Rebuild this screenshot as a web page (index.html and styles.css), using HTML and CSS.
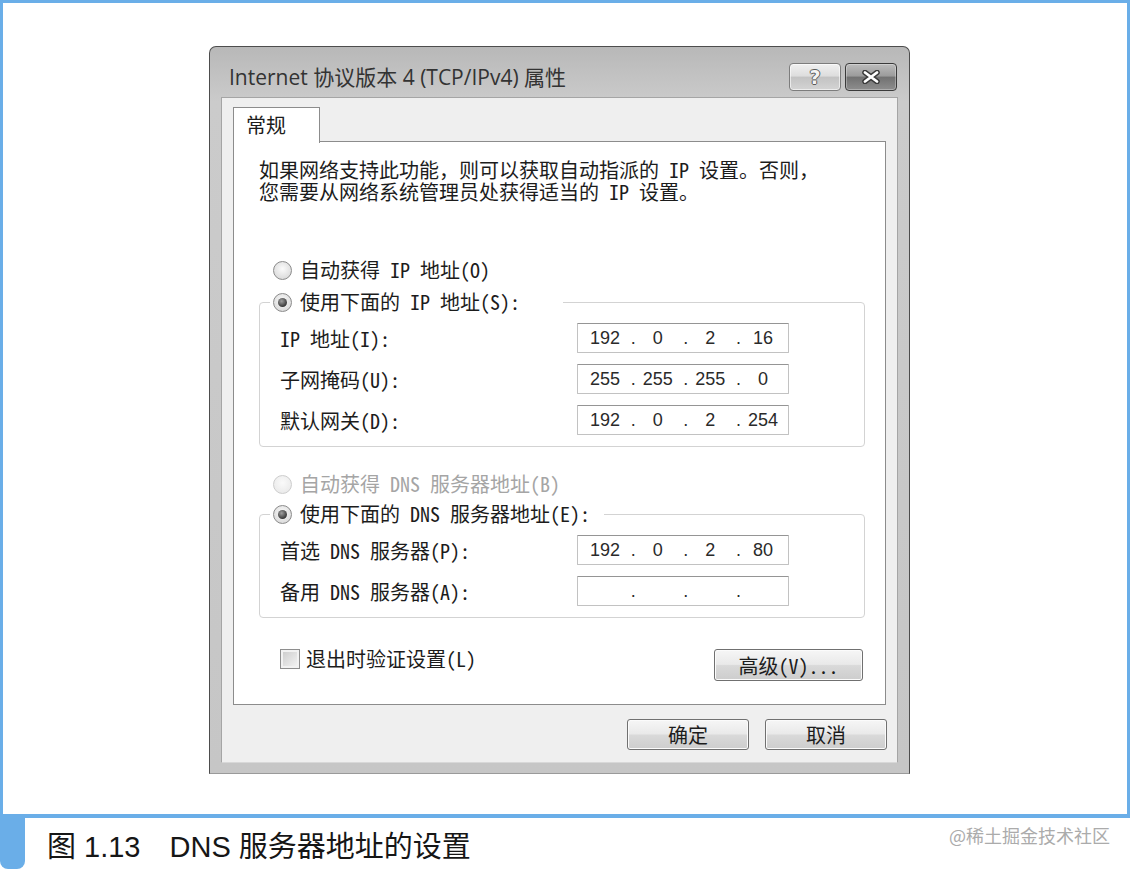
FILE: index.html
```html
<!DOCTYPE html>
<html lang="zh-CN">
<head>
    <meta charset="UTF-8">
    <title>DNS 服务器地址的设置</title>
    <link rel="stylesheet" href="styles.css">
</head>
<body>
<div class="page">
    <div class="figure">
        <div class="window">
            <div class="titlebar">
                <span class="title">Internet 协议版本 4 (TCP/IPv4) 属性</span>
                <div class="caption-btns">
                    <span class="cbtn help">?</span>
                    <span class="cbtn close">
                        <svg width="20" height="14" viewBox="0 0 20 14">
                            <path d="M4 2.5 L16 11.5 M16 2.5 L4 11.5" stroke="#3a3a3a" stroke-width="5.5" stroke-linecap="round"/>
                            <path d="M4 2.5 L16 11.5 M16 2.5 L4 11.5" stroke="#ffffff" stroke-width="2.8" stroke-linecap="round"/>
                        </svg>
                    </span>
                </div>
            </div>

            <div class="client">
                <div class="tabs"><span class="tab">常规</span></div>
                <div class="panel">
                    <p class="desc">如果网络支持此功能<span class="fw">，</span>则可以获取自动指派的 IP 设置<span class="fw">。</span>否则<span class="fw">，</span><br>您需要从网络系统管理员处获得适当的 IP 设置<span class="fw">。</span></p>

                    <div class="option first"><span class="radio"></span>自动获得 IP 地址(O)</div>
                    <fieldset class="group">
                        <legend class="option legend-ip"><span class="radio checked"></span>使用下面的 IP 地址(S):</legend>
                        <div class="fields">
                            <label>IP 地址(I):</label>
                            <div class="ip"><span class="seg">192</span><span class="dot">.</span><span class="seg">0</span><span class="dot">.</span><span class="seg">2</span><span class="dot">.</span><span class="seg">16</span></div>
                            <label>子网掩码(U):</label>
                            <div class="ip"><span class="seg">255</span><span class="dot">.</span><span class="seg">255</span><span class="dot">.</span><span class="seg">255</span><span class="dot">.</span><span class="seg">0</span></div>
                            <label>默认网关(D):</label>
                            <div class="ip"><span class="seg">192</span><span class="dot">.</span><span class="seg">0</span><span class="dot">.</span><span class="seg">2</span><span class="dot">.</span><span class="seg">254</span></div>
                        </div>
                    </fieldset>

                    <div class="option disabled second"><span class="radio"></span>自动获得 DNS 服务器地址(B)</div>
                    <fieldset class="group dns">
                        <legend class="option legend-dns"><span class="radio checked"></span>使用下面的 DNS 服务器地址(E):</legend>
                        <div class="fields">
                            <label>首选 DNS 服务器(P):</label>
                            <div class="ip"><span class="seg">192</span><span class="dot">.</span><span class="seg">0</span><span class="dot">.</span><span class="seg">2</span><span class="dot">.</span><span class="seg">80</span></div>
                            <label>备用 DNS 服务器(A):</label>
                            <div class="ip"><span class="seg"></span><span class="dot">.</span><span class="seg"></span><span class="dot">.</span><span class="seg"></span><span class="dot">.</span><span class="seg"></span></div>
                        </div>
                    </fieldset>

                    <div class="panel-footer">
                        <div class="checkrow"><span class="check"></span>退出时验证设置(L)</div>
                        <button class="btn advanced">高级(V)...</button>
                    </div>
                </div>

                <div class="actions">
                    <button class="btn">确定</button>
                    <button class="btn">取消</button>
                </div>
            </div>
        </div>
    </div>

    <div class="caption">
        <span class="caption-mark"></span>
        <span class="caption-text">图 1.13　DNS 服务器地址的设置</span>
        <span class="watermark">@稀土掘金技术社区</span>
    </div>
</div>
</body>
</html>
```

FILE: styles.css
```css
* {
    box-sizing: border-box;
}
body {
    margin: 0;
    background: #ffffff;
    font-family: "Noto Sans CJK SC", sans-serif;
}
.page {
    width: 1130px;
}
.figure {
    height: 818px;
    border: 3px solid #6aaee8;
    border-bottom-width: 4px;
    padding: 43px 0 0 206px;
}

/* window */
.window {
    width: 701px;
    height: 728px;
    border: 1px solid #4d4d4d;
    border-bottom-color: #9a9a9a;
    border-radius: 7px 7px 0 0;
    background: linear-gradient(#b8b8b8, #cbcbcb 55px, #c6c6c6);
    display: flex;
    flex-direction: column;
    padding: 0 11px 10px 11px;
}
.titlebar {
    height: 50px;
    display: flex;
    align-items: flex-start;
    justify-content: space-between;
    padding: 0 1px 0 8px;
}
.title {
    margin-top: 18px;
    font-family: "Open Sans", "Noto Sans CJK SC", sans-serif;
    font-size: 21px;
    line-height: 25px;
    color: #333333;
}
.caption-btns {
    display: flex;
    gap: 4px;
    margin-top: 16px;
}
.cbtn {
    width: 52px;
    height: 28px;
    border-radius: 4px;
    display: flex;
    align-items: center;
    justify-content: center;
}
.help {
    border: 1px solid #7d7d7d;
    background: linear-gradient(#f0f0f0, #dedede 45%, #c3c3c3 52%, #d4d4d4);
    box-shadow: inset 0 0 0 1px rgba(255,255,255,0.6);
    font-family: "DejaVu Sans", sans-serif;
    font-weight: bold;
    font-size: 19px;
    color: #f4f4f4;
    text-shadow: 1px 0 #5a5a5a, -1px 0 #5a5a5a, 0 1px #5a5a5a, 0 -1px #5a5a5a;
}
.close {
    border: 1px solid #3a3a3a;
    background: linear-gradient(#bcbcbc, #9c9c9c 45%, #727272 52%, #8e8e8e);
    box-shadow: inset 0 0 0 1px rgba(255,255,255,0.3);
}

.client {
    flex: 1;
    background: #efefef;
    border: 1px solid #a5a5a5;
    border-bottom-color: #d8d8d8;
    padding: 9px 11px 0 11px;
    display: flex;
    flex-direction: column;
}
.tabs {
    display: flex;
    height: 35px;
    margin-bottom: -1px;
    position: relative;
    z-index: 1;
}
.tab {
    width: 87px;
    height: 36px;
    border: 1px solid #8c8c8c;
    border-bottom: none;
    background: #ffffff;
    padding: 4px 0 0 12px;
    font-size: 20px;
    line-height: 26px;
    color: #1c1c1c;
}
.panel {
    height: 564px;
    border: 1px solid #8c8c8c;
    background: #ffffff;
    padding: 17px 20px 0 25px;
    font-size: 20px;
    font-feature-settings: "hwid";
    color: #1c1c1c;
}
.desc {
    margin: 0;
    line-height: 22px;
}
.fw {
    font-feature-settings: normal;
}

.option {
    display: flex;
    align-items: center;
    gap: 8px;
    height: 22px;
    line-height: 22px;
    white-space: nowrap;
}
.option.first {
    margin: 56px 0 0 14px;
}
.option.second {
    margin: 26px 0 0 14px;
}
.option.disabled {
    color: #a5a5a5;
}
.radio {
    flex: none;
    width: 19px;
    height: 19px;
    border-radius: 50%;
    border: 1px solid #8b8b8b;
    background: radial-gradient(circle at 50% 40%, #fbfbfb, #d2d2d2);
    position: relative;
}
.disabled .radio {
    border-color: #cdcdcd;
    background: radial-gradient(circle at 50% 40%, #fafafa, #e6e6e6);
}
.radio.checked::after {
    content: "";
    position: absolute;
    inset: 4px;
    border-radius: 50%;
    background: radial-gradient(circle at 40% 35%, #a0a0a0, #333333 75%);
}

.group {
    margin: 10px 0 0 0;
    padding: 10px 0 11px 10px;
    border: 1px solid #d3d3d3;
    border-radius: 4px;
    min-width: 0;
}
.group.dns {
    margin-top: 8px;
}
.group legend {
    padding: 0 3px;
}
.legend-ip {
    width: 293px;
}
.legend-dns {
    width: 334px;
}
.fields {
    display: grid;
    grid-template-columns: 297px 212px;
    row-gap: 11px;
    align-items: center;
    margin-left: 10px;
}
.fields label {
    white-space: nowrap;
}
.ip {
    height: 30px;
    border: 1px solid #c2c2c2;
    border-top-color: #959595;
    border-radius: 1px;
    display: flex;
    align-items: center;
    padding-left: 5px;
    font-family: "Liberation Sans", sans-serif;
    font-size: 18px;
    color: #2a2a2a;
}
.seg {
    width: 44px;
    text-align: center;
}
.dot {
    width: 8.67px;
    text-align: right;
}

.panel-footer {
    display: flex;
    justify-content: space-between;
    align-items: flex-start;
    margin-top: 31px;
    padding-left: 21px;
}
.checkrow {
    display: flex;
    align-items: center;
    gap: 6px;
    height: 20px;
    line-height: 20px;
}
.check {
    width: 20px;
    height: 20px;
    border: 1px solid #8e8e8e;
    background: linear-gradient(135deg, #c9c9c9, #f7f7f7);
    box-shadow: inset 0 0 0 2px #f2f2f2;
}

.btn {
    font-family: "Noto Sans CJK SC", sans-serif;
    font-size: 20px;
    font-feature-settings: "hwid";
    color: #1c1c1c;
    border: 1px solid #707070;
    border-radius: 3px;
    background: linear-gradient(#f6f6f6, #e9e9e9 48%, #d9d9d9 52%, #cdcdcd);
    box-shadow: inset 0 0 0 1px #fbfbfb;
    padding: 0;
    width: 122px;
    height: 31px;
    line-height: 29px;
}
.btn.advanced {
    width: 149px;
    height: 32px;
    margin-right: 2px;
}
.actions {
    display: flex;
    justify-content: flex-end;
    gap: 16px;
    margin: 14px -1px 0 0;
}

/* caption under the figure */
.caption {
    display: flex;
    height: 51px;
}
.caption-mark {
    width: 25px;
    height: 51px;
    background: #6aaee8;
    border-radius: 0 0 8px 8px;
}
.caption-text {
    margin: 12px 0 0 22px;
    font-family: "Liberation Sans", "Noto Sans CJK SC", sans-serif;
    font-size: 29px;
    line-height: 34px;
    color: #161616;
}
.watermark {
    margin: 6px 20px 0 auto;
    font-size: 18px;
    line-height: 22px;
    color: #ababab;
}
```
